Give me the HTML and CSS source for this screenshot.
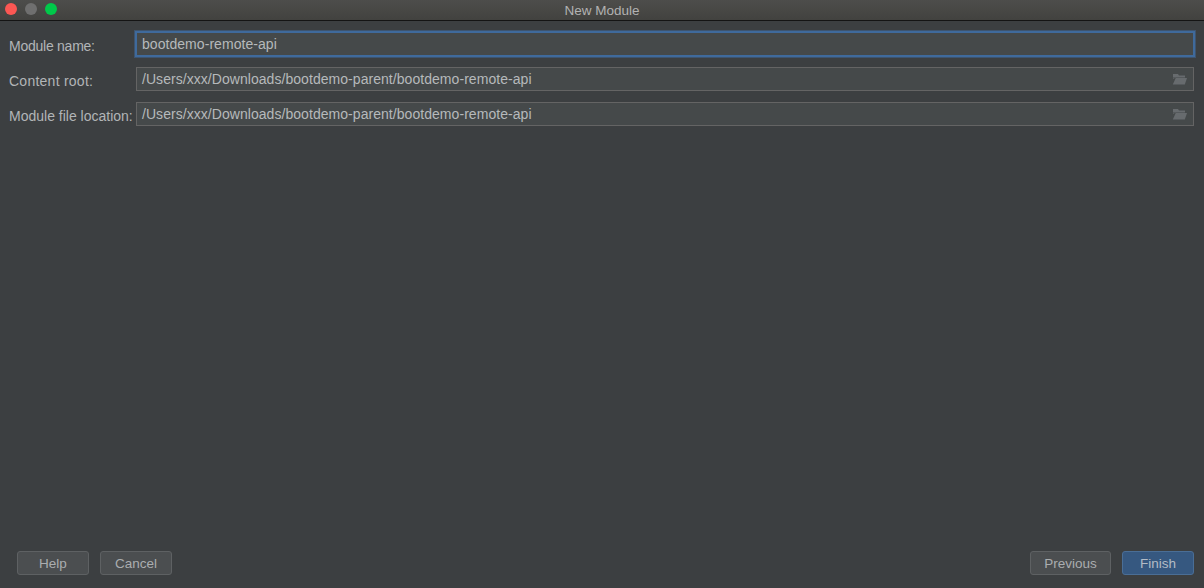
FILE: index.html
```html
<!DOCTYPE html>
<html lang="en">
<head>
<meta charset="utf-8">
<title>New Module</title>
<link rel="stylesheet" href="styles.css">
</head>
<body>
<div class="window">
  <header class="titlebar">
    <div class="lights">
      <span class="light red"></span>
      <span class="light grey"></span>
      <span class="light green"></span>
    </div>
    <div class="title">New Module</div>
  </header>
  <main class="content">
    <div class="form">
      <label class="label label-first">Module name:</label>
      <div class="field focused">bootdemo-remote-api</div>
      <label class="label label-root">Content root:</label>
      <div class="field">/Users/xxx/Downloads/bootdemo-parent/bootdemo-remote-api
        <svg class="folder" viewBox="0 0 15 12" width="15" height="12"><path d="M1 1h5l1 1.500h6v2H4L1 6z" fill="#676b6e"/><path d="M3.700 5H15l-2.200 6.500H.800z" fill="#676b6e"/><path d="M1 4.700h2.500" stroke="#45494b" stroke-width=".6" fill="none"/></svg>
      </div>
      <label class="label">Module file location:</label>
      <div class="field">/Users/xxx/Downloads/bootdemo-parent/bootdemo-remote-api
        <svg class="folder" viewBox="0 0 15 12" width="15" height="12"><path d="M1 1h5l1 1.500h6v2H4L1 6z" fill="#676b6e"/><path d="M3.700 5H15l-2.200 6.500H.800z" fill="#676b6e"/><path d="M1 4.700h2.500" stroke="#45494b" stroke-width=".6" fill="none"/></svg>
      </div>
    </div>
    <footer class="buttons">
      <div class="button-group">
        <button class="btn">Help</button>
        <button class="btn">Cancel</button>
      </div>
      <div class="button-group">
        <button class="btn btn-prev">Previous</button>
        <button class="btn btn-primary">Finish</button>
      </div>
    </footer>
  </main>
</div>
</body>
</html>
```
FILE: styles.css
```css
* { box-sizing: border-box; }
html, body { margin: 0; height: 100%; }
body {
  background: #3c3f41;
  font-family: "Liberation Sans", Arial, sans-serif;
  font-size: 14px;
  color: #b4b7b9;
  overflow: hidden;
}
.window { display: flex; flex-direction: column; height: 588px; }
.titlebar {
  position: relative;
  flex: none;
  height: 21px;
  display: flex;
  align-items: center;
  justify-content: center;
  background: linear-gradient(#4d4d4b, #42423f);
  border-bottom: 1px solid #141414;
}
.lights {
  position: absolute;
  left: 5px;
  top: 3px;
  display: flex;
  gap: 8px;
}
.light { width: 12px; height: 12px; border-radius: 50%; }
.red { background: #fc5753; }
.grey { background: #6f6f6f; }
.green { background: #00c94a; }
.title { font-size: 13.500px; color: #b2b2b2; }
.content {
  flex: 1;
  display: flex;
  flex-direction: column;
  justify-content: space-between;
  padding: 10px 10px 13px 9px;
}
.form {
  display: grid;
  grid-template-columns: 127px 1fr;
  row-gap: 11px;
  align-items: center;
}
.label { padding-top: 3px; white-space: nowrap; color: #b2b5b7; }
.label-first { padding-top: 5px; letter-spacing: -.25px; }
.label-root { letter-spacing: .25px; }
.field {
  height: 24px;
  display: flex;
  align-items: center;
  justify-content: space-between;
  padding: 0 6px 0 5px;
  border: 1px solid #646464;
  background: #45494a;
  color: #b6b9bb;
  letter-spacing: .05px;
}
.field.focused {
  height: 26px;
  margin: 0 -1px -1px;
  padding-left: 5px;
  border: 2px solid #3f6a9c;
  box-shadow: 0 0 0 1px rgba(63, 106, 156, .5);
}
.folder { flex: none; }
.buttons {
  display: flex;
  justify-content: space-between;
  padding-left: 8px;
}
.button-group { display: flex; gap: 11px; }
.btn {
  width: 72px;
  height: 24px;
  padding: 0;
  border: 1px solid #5e6163;
  border-radius: 3px;
  background: #4b4e50;
  color: #aaadaf;
  font: inherit;
  font-size: 13.500px;
}
.btn-prev { width: 81px; }
.btn-primary {
  background: #365880;
  border-color: #4a6e96;
  color: #b3bcc6;
}
```
